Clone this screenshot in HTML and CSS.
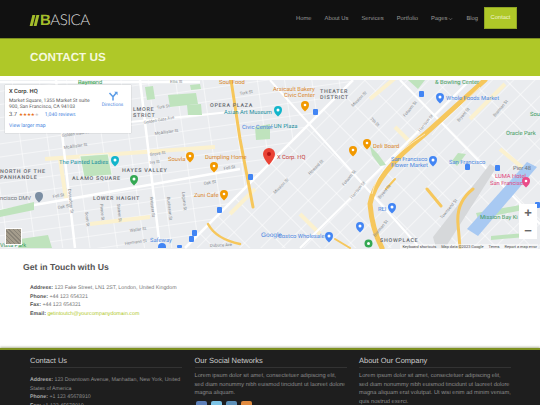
FILE: index.html
```html
<!DOCTYPE html>
<html lang="en">
<head>
    <meta charset="UTF-8">
    <meta name="viewport" content="width=device-width, initial-scale=1.0">
    <title>Basica - Contact Us</title>
    <link rel="stylesheet" href="styles.css">
</head>
<body>
    <!-- Top navigation -->
    <header class="topbar">
        <a class="logo" href="#"><i class="logo-bar"></i><i class="logo-bar"></i><b>B</b>ASICA</a>
        <nav class="main-nav">
            <a href="#">Home</a>
            <a href="#">About Us</a>
            <a href="#">Services</a>
            <a href="#">Portfolio</a>
            <a href="#">Pages <svg class="caret" viewBox="0 0 6 4"><path d="M1 1l2 2 2-2" fill="none" stroke="#888" stroke-width=".7"/></svg></a>
            <a href="#">Blog</a>
            <a href="#" class="active">Contact</a>
        </nav>
    </header>

    <section class="page-title">
        <h1>CONTACT US</h1>
    </section>

    <!-- Map -->
    <section class="map-wrap">
        <svg class="map" viewBox="0 81 540 169" width="540" height="169">
            <defs>
                <pattern id="grid-west" width="27" height="13" patternUnits="userSpaceOnUse" patternTransform="rotate(-8)">
                    <path d="M0 0H27M0 0V13" stroke="#fff" stroke-width="1.1" fill="none"/>
                </pattern>
                <pattern id="grid-soma" width="25" height="15" patternUnits="userSpaceOnUse" patternTransform="rotate(-45)">
                    <path d="M0 0H25M0 0V15" stroke="#fff" stroke-width="1.1" fill="none"/>
                </pattern>
            </defs>
            <rect x="0" y="81" width="540" height="169" fill="#eaecef"/>
            <path d="M185 249L353 81H0V249Z" fill="url(#grid-west)"/>
            <path d="M185 249L353 81H540V249Z" fill="url(#grid-soma)"/>

            <!-- pale streets -->
            <g fill="none" stroke="#fbf1cf" stroke-width="4">
                <path d="M45 160L215 148M90 225L150 218M60 98L100 94M370 100l30 -25M395 128l20 20M470 120l35 -35M500 150l30 25M300 215l20 20"/>
                <path d="M60 160l6 40M255 190l-25 25"/>
            </g>
            <!-- main roads -->
            <g fill="none" stroke="#fff">
                <path stroke-width="2.500" d="M0 212L240 170M0 83L200 83M56 81L75 249M140 81L160 249M185 249L353 81"/>
                <path stroke-width="2" d="M60 130L240 112M270 81L420 249M400 81L540 225M300 249L470 81"/>
            </g>

            <!-- parks -->
            <g fill="#bfe3bd">
                <path d="M168 96L196 94 198 105 170 108Z"/>
                <path d="M187 106L201 105 202 116 188 116Z"/>
                <path d="M145 88L153 87 155 100 147 101Z"/>
                <path d="M80 157L108 155 112 176 84 178Z"/>
                <path d="M0 211L34 203V211L0 218Z"/>
                <path d="M20 240L48 236 52 249H18Z"/>
                <path d="M78 83H96V85H78Z"/>
                <path d="M190 86L200 85 201 90 191 91Z"/>
                <path d="M408 81L425 81 418 90Z"/>
                <path d="M458 154L466 155 457 167 452 162Z"/>
                <path d="M255 128L270 125 270 140 256 141Z"/>
                <path d="M370 147L378 155 386 166 380 167 372 156Z"/>
                <path d="M476 214L520 206 523 211 478 220Z"/>
                <path d="M491 237L525 234 526 238 491 241Z"/>
            </g>
            <path d="M80 157L108 155 112 176 84 178Z" fill="none" stroke="#fff" stroke-width=".6"/>

            <!-- water, rail yard -->
            <path d="M467 230L527 163 537 168 478 237Z" fill="#a8c9f2"/>
            <path d="M433 238L490 165 496 169 445 249H436Z" fill="#d6d8da"/>

            <!-- freeways -->
            <g fill="none" stroke="#f6c75c" stroke-linecap="round">
                <path stroke-width="3" d="M231 81L240 140 253 208"/>
                <path stroke-width="2.500" d="M208 225Q216 240 240 245"/>
                <path stroke-width="5" d="M485 81L425 135Q375 175 370 205Q372 230 382 249"/>
                <path stroke-width="3" d="M427 190L441 207M473 190Q456 203 458 225L460 249"/>
                <path stroke-width="2" d="M395 180L386 190M350 249L335 240"/>
            </g>
            <path d="M432 136L440 126 480 88M372 195Q378 165 425 135" fill="none" stroke="#fff" stroke-width=".6"/>

            <!-- street names -->
            <g class="st">
                <text x="35" y="90">Turk Blvd</text>
                <text x="170" y="84">Ellis St</text>
                <text x="240" y="96" transform="rotate(-10 240 96)">Turk St</text>
                <text x="157" y="110" transform="rotate(-8 157 110)">Turk St</text>
                <text x="144" y="125" transform="rotate(-10 144 125)">Golden Gate Ave</text>
                <text x="62" y="138" transform="rotate(-8 62 138)">Golden Gate Ave</text>
                <text x="155" y="136" transform="rotate(-8 155 136)">McAllister St</text>
                <text x="64" y="150" transform="rotate(-8 64 150)">McAllister St</text>
                <text x="150" y="157" transform="rotate(-8 150 157)">Grove St</text>
                <text x="150" y="165" transform="rotate(-8 150 165)">Ivy St</text>
                <text x="53" y="199" transform="rotate(-10 53 199)">Fell St</text>
                <text x="58" y="210" transform="rotate(-10 58 210)">Oak St</text>
                <text x="224" y="171" transform="rotate(-10 224 171)">Fell St</text>
                <text x="204" y="186" transform="rotate(-10 204 186)">Oak St</text>
                <text x="130" y="233" transform="rotate(-8 130 233)">Waller St</text>
                <text x="125" y="246" transform="rotate(-8 125 246)">Hermann St</text>
                <text x="210" y="248" transform="rotate(-3 210 248)">Dubuce Ave</text>
                <text x="68" y="190" transform="rotate(84 68 190)">Divisadero St</text>
                <text x="85" y="213" transform="rotate(84 85 213)">Scott St</text>
                <text x="100" y="205" transform="rotate(84 100 205)">Pierce St</text>
                <text x="117" y="205" transform="rotate(84 117 205)">Steiner St</text>
                <text x="150" y="198" transform="rotate(84 150 198)">Webster St</text>
                <text x="167" y="198" transform="rotate(84 167 198)">Buchanan St</text>
                <text x="182" y="193" transform="rotate(84 182 193)">Laguna St</text>
                <text x="353" y="108" transform="rotate(-45 353 108)">Mission St</text>
                <text x="405" y="118" transform="rotate(-50 405 118)">Folsom St</text>
                <text x="420" y="133" transform="rotate(-50 420 133)">Harrison St</text>
                <text x="459" y="123" transform="rotate(-50 459 123)">Bryant St</text>
                <text x="495" y="118" transform="rotate(-50 495 118)">Brannan St</text>
                <text x="370" y="120" transform="rotate(45 370 120)">7th St</text>
                <text x="310" y="176" transform="rotate(-45 310 176)">Howard St</text>
                <text x="344" y="187" transform="rotate(-50 344 187)">Folsom St</text>
                <text x="352" y="200" transform="rotate(-50 352 200)">Harrison St</text>
                <text x="380" y="200" transform="rotate(-50 380 200)">Bryant St</text>
                <text x="375" y="238" transform="rotate(-50 375 238)">Brannan St</text>
                <text x="442" y="220" transform="rotate(-50 442 220)">Townsend St</text>
                <text x="275" y="195" transform="rotate(-45 275 195)">Mission St</text>
            </g>

            <!-- neighbourhoods -->
            <g class="hood">
                <text x="133" y="112">LMORE</text>
                <text x="133" y="118">STRICT</text>
                <text x="210" y="108">OPERA PLAZA</text>
                <text x="320" y="94">THEATER</text>
                <text x="320" y="100">DISTRICT</text>
                <text x="0" y="174">NORTH OF THE</text>
                <text x="0" y="180">PANHANDLE</text>
                <text x="122" y="173">HAYES VALLEY</text>
                <text x="72" y="181">ALAMO SQUARE</text>
                <text x="93" y="201">LOWER HAIGHT</text>
                <text x="380" y="243">SHOWPLACE</text>
            </g>

            <!-- places -->
            <g class="poi">
                <text class="orange" x="219" y="85">Soul Food</text>
                <text class="teal" x="224" y="115">Asian Art Museum</text>
                <text class="blue" x="242" y="130">Civic Center</text>
                <text class="teal" x="270" y="129">/ UN Plaza</text>
                <text class="orange" x="273" y="92">Arsicault Bakery</text>
                <text class="orange" x="284" y="98">Civic Center</text>
                <text class="green" x="435" y="85">&amp; Bowling Center</text>
                <text class="green" x="78" y="85">Raymond</text>
                <text class="blue" x="446" y="101">Whole Foods Market</text>
                <text class="green" x="506" y="136">Oracle Park</text>
                <text class="green" x="530" y="117">Sou</text>
                <text class="teal" x="59" y="165">The Painted Ladies</text>
                <text class="orange" x="168" y="162">Souvla</text>
                <text class="orange" x="205" y="160">Dumpling Home</text>
                <text class="orange" x="194" y="198">Zuni Cafe</text>
                <text class="gray" x="0" y="201">ncisco DMV</text>
                <text class="blue" x="150" y="243">Safeway</text>
                <text class="green" x="0" y="248">Vista Park</text>
                <text class="red" x="277" y="160">X Corp. HQ</text>
                <text class="orange" x="373" y="149">Deli Board</text>
                <text class="blue" x="391" y="162">San Francisco</text>
                <text class="blue" x="391" y="168">Flower Market</text>
                <text class="blue" x="449" y="165">San Francisco</text>
                <text class="pink" x="495" y="179">LUMA Hotel</text>
                <text class="pink" x="490" y="186">San Francisco</text>
                <text class="green" x="480" y="220">Mission Bay Ki</text>
                <text class="blue" x="378" y="212">REI</text>
                <text class="blue" x="278" y="239">Costco Wholesale</text>
                <text class="gray" x="513" y="171">Pier 48</text>
            </g>

            <!-- pins -->
            <g>
                <path d="M186 157a4 4 0 0 1 8 0q0 3-4 6.500q-4-3.500-4-6.500Z" fill="#f29900"/>
                <path d="M210 167a4 4 0 0 1 8 0q0 3-4 6.500q-4-3.500-4-6.500Z" fill="#f29900"/>
                <path d="M220 195a4 4 0 0 1 8 0q0 3-4 6.500q-4-3.500-4-6.500Z" fill="#f29900"/>
                <path d="M301 106a4 4 0 0 1 8 0q0 3-4 6.500q-4-3.500-4-6.500Z" fill="#f29900"/>
                <path d="M349 151a4 4 0 0 1 8 0q0 3-4 6.500q-4-3.500-4-6.500Z" fill="#f29900"/>
                <path d="M363 144a4 4 0 0 1 8 0q0 3-4 6.500q-4-3.500-4-6.500Z" fill="#f29900"/>
                <path d="M111 161a4 4 0 0 1 8 0q0 3-4 6.500q-4-3.500-4-6.500Z" fill="#12b5cb"/>
                <path d="M274 111a4 4 0 0 1 8 0q0 3-4 6.500q-4-3.500-4-6.500Z" fill="#12b5cb"/>
                <path d="M130 180a4 4 0 0 1 8 0q0 3-4 6.500q-4-3.500-4-6.500Z" fill="#34a853"/>
                <path d="M436 98a4 4 0 0 1 8 0q0 3-4 6.500q-4-3.500-4-6.500Z" fill="#4285f4"/>
                <path d="M35 197a4 4 0 0 1 8 0q0 3-4 6.500q-4-3.500-4-6.500Z" fill="#7b8ea3"/>
                <path d="M158 248a4 4 0 0 1 8 0v1h-8Z" fill="#4285f4"/>
                <path d="M429 161a4 4 0 0 1 8 0q0 3-4 6.500q-4-3.500-4-6.500Z" fill="#4285f4"/>
                <path d="M388 208a4 4 0 0 1 8 0q0 3-4 6.500q-4-3.500-4-6.500Z" fill="#4285f4"/>
                <path d="M356 227a4 4 0 0 1 8 0q0 3-4 6.500q-4-3.500-4-6.500Z" fill="#4285f4"/>
                <path d="M325 237a4 4 0 0 1 8 0q0 3-4 6.500q-4-3.500-4-6.500Z" fill="#4285f4"/>
                <circle cx="368.500" cy="244.500" r="4" fill="#34a853"/>
                <path d="M522 182a4 4 0 0 1 8 0q0 3-4 6.500q-4-3.500-4-6.500Z" fill="#ea4c89"/>
                <g fill="#fff">
                    <circle cx="134" cy="180" r="1.500"/>
                    <circle cx="115" cy="161" r="1.500"/>
                    <circle cx="278" cy="111" r="1.500"/>
                    <circle cx="440" cy="98" r="1.500"/>
                    <circle cx="433" cy="161" r="1.500"/>
                    <circle cx="392" cy="208" r="1.500"/>
                    <circle cx="360" cy="227" r="1.500"/>
                    <circle cx="329" cy="237" r="1.500"/>
                    <circle cx="190" cy="157" r="1.300"/>
                    <circle cx="214" cy="167" r="1.300"/>
                    <circle cx="224" cy="195" r="1.300"/>
                    <circle cx="305" cy="106" r="1.300"/>
                    <circle cx="353" cy="151" r="1.300"/>
                    <circle cx="367" cy="144" r="1.300"/>
                    <circle cx="368.500" cy="244.500" r="1.500"/>
                    <circle cx="526" cy="182" r="1.300"/>
                </g>
                <path d="M263 155a6 6 0 0 1 12 0q0 4-6 11q-6-7-6-11Z" fill="#ea4335"/>
                <circle cx="269" cy="155" r="2" fill="#b31412"/>
            </g>
            <!-- transit squares -->
            <g fill="#4285f4">
                <rect x="313" y="110" width="5" height="6" rx="1"/>
                <rect x="419" y="92" width="5" height="6" rx="1"/>
                <rect x="248" y="175" width="5" height="6" rx="1"/>
                <rect x="217" y="208" width="5" height="6" rx="1"/>
                <rect x="192" y="231" width="5" height="6" rx="1"/>
                <rect x="189" y="237" width="5" height="6" rx="1"/>
                <rect x="177" y="246" width="5" height="3" rx="1"/>
                <rect x="495" y="166" width="5" height="6" rx="1"/>
                <rect x="465" y="165" width="5" height="6" rx="1"/>
                <rect x="535" y="203" width="5" height="6" rx="1"/>
            </g>
        </svg>

        <div class="map-card">
            <div class="map-card-info">
                <div class="map-card-name">X Corp. HQ</div>
                <div class="map-card-addr">Market Square, 1355 Market St suite 900, San Francisco, CA 94103</div>
                <div class="map-card-rating">
                    <span class="rating-num">3.7</span>
                    <span class="stars">★★★★<span class="star-off">★</span></span>
                    <a href="#">1,040 reviews</a>
                </div>
                <a class="map-card-larger" href="#">View larger map</a>
            </div>
            <a class="map-card-dir" href="#">
                <svg viewBox="0 0 12 12" width="10" height="10"><path d="M6 11.500V7L1.800 2.500M6 7L9.500 2.800" fill="none" stroke="#5a9be6" stroke-width="1.800"/><path d="M7.500 1H11.500V5Z" fill="#5a9be6"/></svg>
                <span>Directions</span>
            </a>
        </div>

        <div class="map-thumb"></div>
        <span class="google-mark">Google</span>

        <div class="zoom-ctrl">
            <span>+</span>
            <span>−</span>
        </div>

        <div class="map-attrib">
            <span>Keyboard shortcuts</span>
            <span>Map data ©2023 Google</span>
            <span>Terms</span>
            <span>Report a map error</span>
        </div>
    </section>

    <!-- Contact details -->
    <section class="contact-info">
        <h2>Get in Touch with Us</h2>
        <div class="contact-lines">
            <p><b>Address:</b> 123 Fake Street, LN1 2ST, London, United Kingdom</p>
            <p><b>Phone:</b> +44 123 654321</p>
            <p><b>Fax:</b> +44 123 654321</p>
            <p><b>Email:</b> <a href="#">getintoutch@yourcompanydomain.com</a></p>
        </div>
    </section>

    <!-- Footer -->
    <footer class="footer">
        <div class="footer-col">
            <h3>Contact Us</h3>
            <div class="footer-lines">
                <p><b>Address:</b> 123 Downtown Avenue, Manhattan, New York, United States of America</p>
                <p><b>Phone:</b> +1 123 45678910</p>
                <p><b>Fax:</b> +1 123 45678910</p>
            </div>
        </div>
        <div class="footer-col">
            <h3>Our Social Networks</h3>
            <p class="footer-text">Lorem ipsum dolor sit amet, consectetuer adipiscing elit, sed diam nonummy nibh euismod tincidunt ut laoreet dolore magna aliquam.</p>
            <div class="socials">
                <span class="fb"></span>
                <span class="tw"></span>
                <span class="li"></span>
                <span class="rss"></span>
            </div>
        </div>
        <div class="footer-col">
            <h3>About Our Company</h3>
            <p class="footer-text">Lorem ipsum dolor sit amet, consectetuer adipiscing elit, sed diam nonummy nibh euismod tincidunt ut laoreet dolore magna aliquam erat volutpat. Ut wisi enim ad minim veniam, quis nostrud exerci.</p>
        </div>
    </footer>
</body>
</html>
```

FILE: styles.css
```css
* {
    box-sizing: border-box;
}

html, body {
    height: 405px;
    overflow: hidden;
}

body {
    margin: 0;
    font-family: "Liberation Sans", Arial, sans-serif;
    color: #555;
    background: #fff;
    text-rendering: geometricPrecision;
}

a {
    text-decoration: none;
}

p {
    margin: 0;
}

/* Top bar */
.topbar {
    height: 39px;
    background: #111;
    border-bottom: 1px solid #7d9020;
    display: flex;
    align-items: center;
    justify-content: space-between;
    padding: 0 23px 0 31px;
}

.logo {
    font-family: "Lato", "Liberation Sans", sans-serif;
    font-weight: 300;
    font-size: 15px;
    letter-spacing: -0.5px;
    color: #ddd;
    line-height: 1;
    margin-top: 2px;
    display: flex;
    align-items: center;
}

.logo b {
    font-family: "Liberation Sans", sans-serif;
    font-weight: bold;
    color: #a4bd2b;
    margin-left: 1px;
}

.logo-bar {
    width: 2.500px;
    height: 11px;
    margin-right: 1.500px;
    background: #a4bd2b;
    transform: skewX(-14deg);
}

.main-nav {
    display: flex;
    align-items: center;
    gap: 13px;
    font-size: 5.800px;
}

.main-nav a {
    color: #999;
    display: flex;
    align-items: center;
    gap: 1px;
}

.main-nav .active {
    height: 22px;
    width: 33px;
    justify-content: center;
    background: #afc828;
    border: 1px solid #8fa524;
    color: #f1f5d5;
    margin-left: -7px;
    margin-bottom: 2px;
}

.caret {
    width: 5px;
    height: 4px;
}

/* Page title band */
.page-title {
    height: 37px;
    background: #afc828;
    padding: 0 30px;
    display: flex;
    align-items: center;
}

.page-title h1 {
    margin: 0;
    font-size: 11.700px;
    font-weight: bold;
    color: #f5f8dc;
    line-height: 1;
}

/* Map */
.map-wrap {
    position: relative;
    height: 169px;
    margin-top: 4px;
    overflow: hidden;
}

.map {
    display: block;
}

.map text {
    font-family: "Roboto", "Liberation Sans", sans-serif;
}

.st text {
    font-size: 4.200px;
    fill: #85898e;
}

.hood text {
    font-size: 5.400px;
    letter-spacing: 0.7px;
    fill: #66696e;
    font-weight: 500;
}

.poi text {
    font-size: 5.800px;
}

.poi .orange { fill: #d9862a; }
.poi .teal { fill: #1a8f9e; }
.poi .blue { fill: #4a86e0; }
.poi .green { fill: #3b9a5c; }
.poi .gray { fill: #70757a; }
.poi .red { fill: #c5403a; }
.poi .pink { fill: #e0467c; }

.map-card {
    position: absolute;
    left: 5px;
    top: 5px;
    width: 126px;
    height: 48px;
    padding: 0 3px 0 4px;
    background: #fff;
    box-shadow: 0 0 1px rgba(0, 0, 0, 0.3);
    display: flex;
    font-family: "Roboto", "Liberation Sans", sans-serif;
}

.map-card-info {
    width: 88px;
    flex: none;
    padding-top: 3px;
}

.map-card-name {
    font-size: 5.800px;
    font-weight: 500;
    color: #333;
    line-height: 8px;
}

.map-card-addr {
    font-size: 5px;
    line-height: 6px;
    color: #5b5b5b;
    margin-top: 2px;
    width: 86px;
}

.map-card-rating {
    display: flex;
    align-items: center;
    gap: 2px;
    font-size: 5.100px;
    margin-top: 2px;
    line-height: 7px;
}

.rating-num {
    font-size: 5.800px;
    color: #555;
}

.stars {
    color: #e7711b;
    font-size: 4.500px;
    margin-right: 4px;
    letter-spacing: -0.1px;
}

.star-off {
    color: #ccc;
}

.map-card-rating a,
.map-card-larger,
.map-card-dir span {
    color: #4a86e0;
}

.map-card-larger {
    display: block;
    font-size: 5.100px;
    margin-top: 4px;
}

.map-card-dir {
    display: flex;
    flex-direction: column;
    align-items: center;
    font-size: 4.800px;
    padding-top: 6px;
    gap: 2px;
    flex: 1;
}

.map-thumb {
    position: absolute;
    left: 5px;
    top: 148px;
    width: 17px;
    height: 17px;
    border: 1px solid #fff;
    background: repeating-linear-gradient(45deg, #8a8478, #8a8478 1px, #a49c8c 1px, #a49c8c 3px);
}

.google-mark {
    position: absolute;
    left: 261px;
    top: 152px;
    font-size: 6.500px;
    color: #4a86e0;
}

.zoom-ctrl {
    position: absolute;
    left: 519px;
    top: 124px;
    width: 18px;
    height: 35px;
    background: #fff;
    display: flex;
    flex-direction: column;
    align-items: center;
    justify-content: space-around;
    color: #666;
    font-size: 13px;
    font-weight: bold;
    line-height: 1;
}

.map-attrib {
    position: absolute;
    right: 2px;
    bottom: 0;
    display: flex;
    gap: 5px;
    padding: 0 1px 0 2px;
    font-family: "Roboto", "Liberation Sans", sans-serif;
    font-size: 3.900px;
    line-height: 5px;
    color: #444;
    background: rgba(255, 255, 255, 0.5);
}

/* Contact details */
.contact-info {
    height: 99px;
    padding: 12px 23px 0;
}

.contact-info h2 {
    margin: 0;
    font-size: 8.700px;
    font-weight: bold;
    line-height: 12px;
    color: #555;
}

.contact-lines {
    padding: 11px 0 0 7px;
    font-size: 5.300px;
    line-height: 8.500px;
    color: #777;
}

.contact-lines b {
    color: #555;
}

.contact-lines a {
    color: #afc828;
}

/* Footer */
.footer {
    height: 60px;
    background: #1e1e1e;
    border-top: 2px solid #7d9020;
    box-shadow: 0 -1px 2px rgba(100, 110, 60, 0.5);
    padding: 6px 29px 0 30px;
    display: grid;
    grid-template-columns: 152px 152px 152px;
    column-gap: 12.500px;
    overflow: hidden;
}

.footer-col h3 {
    margin: 0 0 4px;
    padding-bottom: 1px;
    font-size: 7.500px;
    font-weight: normal;
    line-height: 10px;
    color: #ccc;
    border-bottom: 1px solid #333;
}

.footer-lines,
.footer-text {
    font-size: 5.700px;
    line-height: 8.500px;
    color: #8d8d8d;
}

.footer-lines {
    font-size: 5.300px;
    padding-top: 4px;
}

.footer-lines b {
    color: #aaa;
}

.socials {
    display: flex;
    gap: 4px;
    margin-top: 3px;
    padding-left: 1px;
}

.socials span {
    flex: none;
    width: 11px;
    height: 11px;
    border-radius: 2px;
}

.fb { background: #5c7fb8; }
.tw { background: #7cc3e6; }
.li { background: #5d90b8; }
.rss { background: #e08a3e; }
```
